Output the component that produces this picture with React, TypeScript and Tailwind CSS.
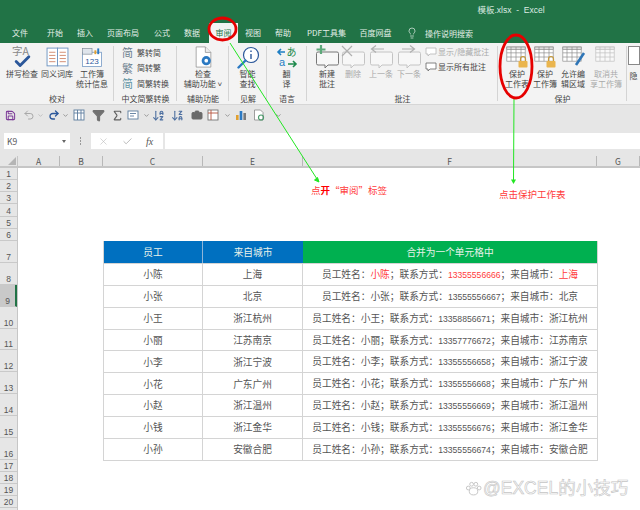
import {
  ArrowDownAZ,
  ArrowDownZA,
  Camera,
  Check,
  ChevronDown,
  Filter,
  Lightbulb,
  Redo2,
  Save,
  Sigma,
  Undo2,
  X,
} from 'lucide-react';
import type { ReactNode } from 'react';

const COLON = '\uFF1A';
const SEMI = '\uFF1B';

const tabs: [string, number][] = [
  ['文件', 40],
  ['开始', 30],
  ['插入', 30],
  ['页面布局', 46],
  ['公式', 32],
  ['数据', 28],
];
const tabsAfter: [string, number][] = [
  ['视图', 30],
  ['帮助', 30],
  ['PDF工具集', 57],
  ['百度网盘', 41],
];

const people = [
  ['小陈', '上海', '13355556666'],
  ['小张', '北京', '13555556667'],
  ['小王', '浙江杭州', '13358856671'],
  ['小丽', '江苏南京', '13357776672'],
  ['小李', '浙江宁波', '13355556658'],
  ['小花', '广东广州', '13355556668'],
  ['小赵', '浙江温州', '13355556669'],
  ['小钱', '浙江金华', '13355556676'],
  ['小孙', '安徽合肥', '13355556674'],
];

const columns: [string, string][] = [
  ['A', 'w-[42px]'],
  ['B', 'w-[43px]'],
  ['C', 'w-[100px]'],
  ['E', 'w-[100px]'],
  ['F', 'w-[294px]'],
  ['G', 'w-[43px]'],
];

function Sheet({ className = '' }: { className?: string }) {
  return (
    <svg viewBox="0 0 24 20" className={className} fill="none" stroke="#8a8a8a" strokeWidth="0.8">
      <rect x="1" y="1" width="22" height="17" fill="#fff" />
      <rect x="1" y="1" width="22" height="3" fill="#dedede" />
      <path d="M1 8h22M1 13h22M6 1v17M12 1v17M18 1v17" />
    </svg>
  );
}

function Lock() {
  return (
    <svg viewBox="0 0 12 13" className="absolute right-0 bottom-0 h-[13px] w-[12px]">
      <path d="M3.5 6V4a2.5 2.5 0 0 1 5 0v2" fill="none" stroke="#c79a3c" strokeWidth="1.2" />
      <rect x="1.5" y="6" width="9" height="6.5" rx="0.8" fill="#eab54e" />
    </svg>
  );
}

function Bubble({ children, color = '#c4c4c4' }: { children?: ReactNode; color?: string }) {
  return (
    <svg viewBox="0 0 26 24" className="h-[24px] w-[26px]" fill="none" stroke={color} strokeWidth="1">
      <path d="M4 7h19a1.5 1.5 0 0 1 1.5 1.5v10a1.5 1.5 0 0 1-1.5 1.5h-9l-3 3v-3H4a1.5 1.5 0 0 1-1.5-1.5v-10A1.5 1.5 0 0 1 4 7z" fill="#f7f7f7" />
      {children}
    </svg>
  );
}

function RibbonButton({ icon, lines, width, muted }: { icon: ReactNode; lines: string[]; width: string; muted?: boolean }) {
  return (
    <div className={`flex shrink-0 flex-col items-center ${width} ${muted ? 'text-[#a9a9a9]' : 'text-[#444]'}`}>
      <div className="relative flex h-[24px] items-center justify-center">{icon}</div>
      <div className="text-center leading-[10px] whitespace-nowrap">
        {lines.map((l) => (
          <div key={l}>{l}</div>
        ))}
      </div>
    </div>
  );
}

function Group({ label, width, children }: { label: string; width: string; children: ReactNode }) {
  return (
    <div className={`relative flex shrink-0 flex-col ${width}`}>
      <div className="flex h-[50px] pt-[2px]">{children}</div>
      <div className="h-[11px] text-center leading-[11px] text-[#444]">{label}</div>
      <div className="absolute top-[3px] right-0 bottom-[3px] w-px bg-[#d4d4d4]" />
    </div>
  );
}

function ConvertRow({ glyph, label, color }: { glyph: string; label: string; color: string }) {
  return (
    <div className="flex h-[15.500px] items-center">
      <span className="w-[15px] text-center text-[11px] leading-none" style={{ color }}>
        {glyph}
      </span>
      <span className="ml-[2px] text-[#444]">{label}</span>
    </div>
  );
}

function Ribbon() {
  return (
    <div className="flex h-[62px] border-b border-[#d6d6d6] bg-[#f3f3f3] text-[8px]">
      <Group label="校对" width="w-[114px]">
        <div className="flex pl-[4px]">
          <RibbonButton
            width="w-[36px]"
            lines={['拼写检查']}
            icon={
              <div className="relative h-[24px] w-[20px] text-[10.500px] leading-[12px] whitespace-nowrap text-[#888]">
                <span>字A</span>
                <Check size={19} strokeWidth={3.6} className="absolute bottom-[-2px] left-[1px] text-[#2b579a]" />
              </div>
            }
          />
          <RibbonButton
            width="w-[34px]"
            lines={['同义词库']}
            icon={
              <svg viewBox="0 0 22 20" className="h-[21px] w-[23px]" fill="#fff" stroke="#6f95c2" strokeWidth="0.9">
                <rect x="1" y="1" width="10" height="17" />
                <rect x="11" y="1" width="10" height="17" />
                <path d="M3 5h6M3 8h6M3 11h6M3 14h6M13 5h6M13 8h6M13 11h6M13 14h6" stroke="#d18a6e" />
              </svg>
            }
          />
          <RibbonButton
            width="w-[36px]"
            lines={['工作簿', '统计信息']}
            icon={
              <svg viewBox="0 0 22 21" className="h-[21px] w-[21px]">
                <rect x="0.5" y="5" width="20" height="15" fill="#fff" stroke="#6f95c2" strokeWidth="0.8" />
                <rect x="0.5" y="1" width="10" height="6" fill="#dfe5ec" stroke="#7f8a96" strokeWidth="0.7" />
                <rect x="13" y="3" width="2" height="4" fill="#e0a030" />
                <rect x="16" y="1" width="2" height="6" fill="#2b79c2" />
                <text x="10.5" y="17" textAnchor="middle" fontSize="8.500" fill="#2b579a" fontFamily="Liberation Sans, sans-serif">123</text>
              </svg>
            }
          />
        </div>
      </Group>

      <Group label="中文简繁转换" width="w-[63px]">
        <div className="flex flex-col pl-[6px]">
          <ConvertRow glyph="简" label="繁转简" color="#6d7f8f" />
          <ConvertRow glyph="繁" label="简转繁" color="#6d7f8f" />
          <ConvertRow glyph="简" label="简繁转换" color="#5f93a3" />
        </div>
      </Group>

      <Group label="辅助功能" width="w-[52px]">
        <RibbonButton
          width="w-[52px]"
          lines={['检查', '辅助功能 ˅']}
          icon={
            <svg viewBox="0 0 20 24" className="h-[22px] w-[19px]">
              <path d="M2 1h10l6 6v16H2z" fill="#fff" stroke="#8c8c8c" strokeWidth="0.8" />
              <path d="M12 1v6h6" fill="#eee" stroke="#8c8c8c" strokeWidth="0.8" />
              <circle cx="13" cy="16" r="5" fill="#2b79c2" />
              <circle cx="13" cy="16" r="2" fill="#fff" />
            </svg>
          }
        />
      </Group>

      <Group label="见解" width="w-[38px]">
        <RibbonButton
          width="w-[37px]"
          lines={['智能', '查找']}
          icon={
            <svg viewBox="0 0 24 24" className="h-[24px] w-[24px]" fill="none">
              <circle cx="15" cy="10" r="7.5" fill="#fff" stroke="#2b579a" strokeWidth="1.2" />
              <path d="M9.5 15.5L2.5 22.5" stroke="#2b79c2" strokeWidth="2.4" strokeLinecap="round" />
              <path d="M15 9v5M15 5.5v1.5" stroke="#2b579a" strokeWidth="1.4" />
            </svg>
          }
        />
      </Group>

      <Group label="语言" width="w-[40px]">
        <RibbonButton
          width="w-[39px]"
          lines={['翻', '译']}
          icon={
            <svg viewBox="0 0 22 22" className="h-[22px] w-[22px]">
              <path d="M9 6H3M5 3L2 6l3 3" fill="none" stroke="#1f7fc4" strokeWidth="1.6" />
              <path d="M12 18h7M17 15l3 3-3 3" fill="none" stroke="#1f8a4c" strokeWidth="1.6" />
              <text x="15.5" y="10" textAnchor="middle" fontSize="10" fill="#1f8a4c" fontFamily="Noto Sans CJK JP, sans-serif">あ</text>
              <text x="6" y="20" textAnchor="middle" fontSize="11" fill="#1f7fc4" fontFamily="Liberation Sans, sans-serif">a</text>
            </svg>
          }
        />
      </Group>

      <Group label="批注" width="w-[191px]">
        <div className="flex pl-[5px]">
          <RibbonButton
            width="w-[30px]"
            lines={['新建', '批注']}
            icon={
              <Bubble color="#777">
                <path d="M7 0v9M2.5 4.5h9" stroke="#5da87a" strokeWidth="2.2" />
              </Bubble>
            }
          />
          <RibbonButton
            muted
            width="w-[22px]"
            lines={['删除']}
            icon={
              <Bubble>
                <path d="M2 1l10 10M12 1L2 11" stroke="#b0b0b0" strokeWidth="1.2" />
              </Bubble>
            }
          />
          <RibbonButton
            muted
            width="w-[34px]"
            lines={['上一条']}
            icon={
              <Bubble>
                <path d="M16 4H4M8 0.5L3.5 4 8 7.5" stroke="#b0b0b0" strokeWidth="1.2" />
              </Bubble>
            }
          />
          <RibbonButton
            muted
            width="w-[22px]"
            lines={['下一条']}
            icon={
              <Bubble>
                <path d="M6 4h12M14 0.5L18.5 4 14 7.5" stroke="#b0b0b0" strokeWidth="1.2" />
              </Bubble>
            }
          />
          <div className="ml-[5px] flex flex-col gap-[2px] whitespace-nowrap">
            <div className="flex h-[13px] items-center gap-[1px] text-[#a9a9a9]">
              <svg viewBox="0 0 12 10" className="h-[10px] w-[12px]" fill="#fff" stroke="#b5b5b5" strokeWidth="0.8">
                <path d="M1 1h10v6H5L3 9V7H1z" />
              </svg>
              显示/隐藏批注
            </div>
            <div className="flex h-[13px] items-center gap-[1px] text-[#444]">
              <svg viewBox="0 0 12 10" className="h-[10px] w-[12px]" fill="#fff" stroke="#666" strokeWidth="0.8">
                <path d="M1 1h10v6H5L3 9V7H1z" />
              </svg>
              显示所有批注
            </div>
          </div>
        </div>
      </Group>

      <Group label="保护" width="w-[129px]">
        <div className="flex pl-[5px]">
          <RibbonButton
            width="w-[28px]"
            lines={['保护', '工作表']}
            icon={
              <div className="relative h-[22px] w-[23px]">
                <Sheet className="h-[17px] w-[20px]" />
                <Lock />
              </div>
            }
          />
          <RibbonButton
            width="w-[28px]"
            lines={['保护', '工作簿']}
            icon={
              <div className="relative h-[22px] w-[23px]">
                <Sheet className="h-[17px] w-[20px]" />
                <Lock />
              </div>
            }
          />
          <RibbonButton
            width="w-[28px]"
            lines={['允许编', '辑区域']}
            icon={
              <div className="relative h-[22px] w-[22px]">
                <Sheet className="h-[17px] w-[20px]" />
                <svg viewBox="0 0 12 16" className="absolute right-[-2px] bottom-0 h-[16px] w-[12px]">
                  <path d="M10 1L2 13" stroke="#2e75b6" strokeWidth="2.6" />
                </svg>
              </div>
            }
          />
          <RibbonButton
            muted
            width="w-[38px]"
            lines={['取消共', '享工作簿']}
            icon={
              <div className="relative h-[22px] w-[22px] opacity-50">
                <Sheet className="h-[17px] w-[20px]" />
              </div>
            }
          />
        </div>
      </Group>

      <div className="flex flex-1 flex-col items-center pt-[3px] text-[#444]">
        <div className="h-[19px] w-[12px] border border-[#888] bg-white" />
        <div className="mt-[6px] leading-[10px]">隐</div>
      </div>
    </div>
  );
}

function QuickAccess() {
  return (
    <div className="flex h-[20px] items-center bg-[#e6e6e6] pl-[5px]">
      <Save size={11} strokeWidth={2.2} className="shrink-0 text-[#7d3c98]" />
      <Undo2 size={12} className="ml-[7px] shrink-0 text-[#a8a8a8]" />
      <ChevronDown size={7} className="ml-[2px] shrink-0 text-[#a8a8a8]" />
      <Redo2 size={12} strokeWidth={2.6} className="ml-[4px] shrink-0 text-[#2b579a]" />
      <ChevronDown size={7} className="ml-[1.500px] shrink-0 text-[#666]" />
      <svg viewBox="0 0 12 12" className="ml-[4.500px] h-[12px] w-[12px] shrink-0" fill="#fff" stroke="#5b7c9d" strokeWidth="0.9">
        <rect x="1" y="1" width="10" height="10" />
        <path d="M1 4h10M4.5 1v10M8 1v10" />
      </svg>
      <Filter size={13} fill="#707070" className="ml-[6.500px] shrink-0 text-[#707070]" />
      <Sigma size={13} className="ml-[6px] shrink-0 text-[#5f5f5f]" />
      <svg viewBox="0 0 12 10" className="ml-[3.500px] h-[10px] w-[12px] shrink-0" fill="#fff" stroke="#5b7c9d" strokeWidth="0.9">
        <rect x="1" y="1" width="10" height="8" />
        <path d="M3 3.5h6M3 6h4" />
      </svg>
      <ChevronDown size={7} className="ml-[3.500px] shrink-0 text-[#666]" />
      <ArrowDownAZ size={13} className="ml-[2px] shrink-0 text-[#4d6fa0]" />
      <ArrowDownZA size={13} className="ml-[6px] shrink-0 text-[#4d6fa0]" />
      <Camera size={12} fill="#6a6a6a" className="ml-[7.500px] shrink-0 text-[#6a6a6a]" />
      <svg viewBox="0 0 12 12" className="ml-[4px] h-[12px] w-[12px] shrink-0" fill="#fff" stroke="#777" strokeWidth="0.9">
        <rect x="1" y="1" width="10" height="10" />
        <path d="M1 4h10M4 1v10" stroke="#b5533c" />
      </svg>
      <ChevronDown size={7} className="ml-[4.500px] shrink-0 text-[#666]" />
      <svg viewBox="0 0 12 12" className="ml-[4.500px] h-[12px] w-[12px] shrink-0">
        <rect x="1" y="6" width="2.6" height="5" fill="#e0a030" />
        <rect x="4.7" y="2" width="2.6" height="9" fill="#2b79c2" />
        <rect x="8.4" y="4" width="2.6" height="7" fill="#7a7a7a" />
      </svg>
      <svg viewBox="0 0 12 12" className="ml-[6px] h-[12px] w-[12px] shrink-0" fill="#fff">
        <path d="M1.5 1h6l2.5 2.5V11h-8.500z" stroke="#888" strokeWidth="0.8" />
        <circle cx="8" cy="8.500" r="2.500" fill="none" stroke="#4b9a6b" strokeWidth="1.2" />
      </svg>
      <ChevronDown size={7} className="ml-[9.500px] shrink-0 text-[#666]" />
    </div>
  );
}

function FormulaBar() {
  return (
    <div className="flex h-[31px] bg-[#e6e6e6] pt-[8px] pb-[7px] pl-[4px]">
      <div className="flex w-[66px] items-center justify-between bg-white pr-[4px] pl-[3px] text-[8.500px] text-[#555]">
        K9
        <span className="h-0 w-0 border-x-[2.500px] border-t-[3px] border-x-transparent border-t-[#666]" />
      </div>
      <div className="flex w-[21px] flex-col items-center justify-center gap-[1.500px]">
        <span className="h-[1.500px] w-[1.500px] bg-[#999]" />
        <span className="h-[1.500px] w-[1.500px] bg-[#999]" />
        <span className="h-[1.500px] w-[1.500px] bg-[#999]" />
      </div>
      <div className="flex w-[72px] items-center bg-white pl-[7px]">
        <X size={11} strokeWidth={1.2} className="text-[#b5b5b5]" />
        <Check size={11} strokeWidth={2} className="ml-[13px] text-[#b5b5b5]" />
        <span className="ml-[13px] font-['Liberation_Serif',serif] text-[10px] text-[#555] italic">fx</span>
      </div>
      <div className="ml-[2px] flex-1 bg-white" />
    </div>
  );
}

function ColumnHeader() {
  return (
    <div className="flex h-[12px] border-b-2 border-[#c6c6c6] bg-[#e6e6e6] text-[8.500px] leading-[10px] text-[#555]">
      <div className="relative w-[18px] shrink-0 border-r border-[#c6c6c6]">
        <span className="absolute right-[1px] bottom-[1px] h-0 w-0 border-b-[8px] border-l-[8px] border-b-[#b5b5b5] border-l-transparent" />
      </div>
      {columns.map(([name, width]) => (
        <div key={name} className={`${width} shrink-0 border-r border-[#b8b8b8] text-center`}>
          {name}
        </div>
      ))}
    </div>
  );
}

function RowHeaders() {
  const rows = Array.from({ length: 20 }, (_, i) => i + 1);
  return (
    <div className="w-[18px] shrink-0 border-r border-[#c6c6c6] bg-[#e6e6e6] font-['Liberation_Sans',sans-serif] text-[8.500px] text-[#555]">
      {rows.map((n) => (
        <div
          key={n}
          className={`flex items-end justify-center border-b border-[#c9c9c9] leading-[10px] ${
            n >= 7 && n <= 16 ? 'h-[21.900px]' : 'h-[12.170px]'
          } ${n === 9 ? 'border-r-2 border-r-[#217346] bg-[#c9c9c9]' : ''}`}
        >
          {n}
        </div>
      ))}
    </div>
  );
}

function Contact({ person, index }: { person: string[]; index: number }) {
  const [name, city, phone] = person;
  const hot = index === 0 ? 'text-[#ff3b3b]' : '';
  return (
    <div className="text-center whitespace-nowrap">
      {'员工姓名' + COLON}
      <span className={hot}>{name}</span>
      {SEMI + '联系方式' + COLON}
      <span className={`font-['Liberation_Sans',sans-serif] text-[8.600px] ${hot}`}>{phone}</span>
      {SEMI + '来自城市' + COLON}
      <span className={hot}>{city}</span>
    </div>
  );
}

function DataTable() {
  return (
    <div className="w-[495px] border-r border-b border-l border-[#d4d4d4] text-[9.700px] text-[#555]">
      <div className="grid h-[21.900px] grid-cols-[99px_100px_1fr] items-center text-center text-[#e8f2ea]">
        <div className="flex h-full items-center justify-center border-r border-[#8fb5d8] bg-[#0070c0]">员工</div>
        <div className="flex h-full items-center justify-center bg-[#0070c0]">来自城市</div>
        <div className="flex h-full items-center justify-center bg-[#00b050]">合并为一个单元格中</div>
      </div>
      {people.map((p, i) => (
        <div key={p[0]} className="grid h-[21.900px] grid-cols-[99px_100px_1fr] border-t border-[#d4d4d4]">
          <div className="flex items-center justify-center border-r border-[#d4d4d4]">{p[0]}</div>
          <div className="flex items-center justify-center border-r border-[#d4d4d4]">{p[1]}</div>
          <div className="flex items-center justify-center">
            <Contact person={p} index={i} />
          </div>
        </div>
      ))}
    </div>
  );
}

export default function App() {
  return (
    <div className="relative flex h-[510px] w-[640px] flex-col overflow-hidden bg-white font-['Noto_Sans_CJK_SC',sans-serif]">
      {/* 标题栏 */}
      <div className="flex h-[23px] items-center justify-center bg-[#217346] pb-[2px] pl-[382px] font-['Liberation_Sans','Noto_Sans_CJK_SC',sans-serif] text-[8.500px] whitespace-pre text-[#dcebe2]">
        模板.xlsx  -  Excel
      </div>
      {/* 选项卡 */}
      <div className="flex h-[20px] bg-[#217346] text-[8px] leading-[19px] text-[#e4efe8]">
        {tabs.map(([t, w]) => (
          <div key={t} className="text-center" style={{ width: w }}>
            {t}
          </div>
        ))}
        <div className="ml-[3px] w-[29px] bg-[#f3f3f3] text-center text-[#217346]">审阅</div>
        {tabsAfter.map(([t, w]) => (
          <div key={t} className="text-center" style={{ width: w }}>
            {t}
          </div>
        ))}
        <div className="flex items-center pl-[10px]">
          <Lightbulb size={12} strokeWidth={1.4} />
          <span className="ml-[7px]">操作说明搜索</span>
        </div>
      </div>

      <Ribbon />
      <QuickAccess />
      <FormulaBar />
      <ColumnHeader />
      <div className="flex flex-1 overflow-hidden">
        <RowHeaders />
        <div className="flex-1 pt-[73px] pl-[85px]">
          <DataTable />
        </div>
      </div>

      {/* 标注 */}
      <svg viewBox="0 0 640 510" className="pointer-events-none absolute inset-0 h-[510px] w-[640px]" fill="none">
        <path d="M230 43L317 179" stroke="#22e622" strokeWidth="1" />
        <path d="M319 182l-4.500-2 3-2.500z" fill="#22e622" stroke="#22e622" strokeWidth="1" />
        <path d="M514 99L513.500 180" stroke="#22e622" strokeWidth="1" />
        <path d="M513.500 184l-2.500-4.500h5z" fill="#22e622" />
        <ellipse cx="222.500" cy="29" rx="13.500" ry="11" stroke="#e60000" strokeWidth="2.800" />
        <ellipse cx="516" cy="66.500" rx="16" ry="31.500" stroke="#e60000" strokeWidth="2.800" />
      </svg>
      <div className="absolute top-[183px] left-[311px] text-[9.500px] leading-[14px] text-[#ff3b3b]">
        点<b className="text-[#f00]">开</b>“审阅”标签
      </div>
      <div className="absolute top-[187px] left-[499px] text-[9.500px] leading-[14px] text-[#ff3b3b]">点击保护工作表</div>

      {/* 水印 */}
      <div className="absolute top-[477px] left-[465px] flex items-center font-['Liberation_Sans','Noto_Sans_CJK_SC',sans-serif] text-[17.500px] leading-[22px] whitespace-nowrap text-white [-webkit-text-stroke:0.600px_#c4c4c4]">
        <svg viewBox="0 0 18 18" className="mr-[1px] h-[17px] w-[17px]" fill="#fff" stroke="#c4c4c4" strokeWidth="1">
          <ellipse cx="9" cy="12" rx="4.500" ry="3.800" />
          <circle cx="3.500" cy="8.500" r="2" />
          <circle cx="7" cy="4.500" r="2" />
          <circle cx="11.500" cy="4.500" r="2" />
          <circle cx="15" cy="8.500" r="2" />
        </svg>
        @EXCEL的小技巧
      </div>
    </div>
  );
}
